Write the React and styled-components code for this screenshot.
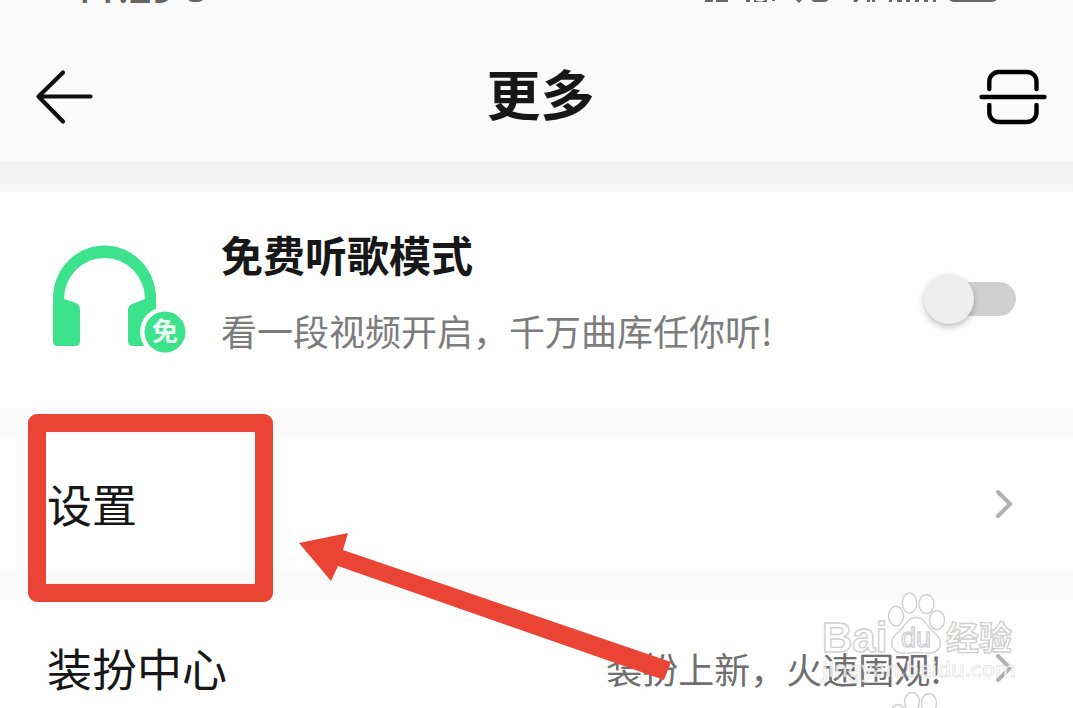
import styled, { createGlobalStyle } from "styled-components";

const GlobalStyle = createGlobalStyle`
  * {
    box-sizing: border-box;
  }

  body {
    margin: 0;
    background: #fefefe;
    font-family: "Noto Sans CJK SC", "Noto Sans", sans-serif;
    color: #171717;
  }
`;

const Page = styled.div`
  position: relative;
  height: 100vh;
  overflow: hidden;
`;

const StatusBar = styled.div`
  display: flex;
  align-items: flex-end;
  justify-content: space-between;
  height: 4px;
  padding: 0 74px 0 72px;
  overflow: hidden;
  background: #fafafa;
  color: #666;
`;

const StatusGroup = styled.div`
  display: flex;
  align-items: flex-end;
  gap: 12px;
`;

const Clock = styled.span`
  font-family: "Noto Sans", sans-serif;
  font-size: 40px;
  font-weight: 500;
  line-height: 32px;
`;

const Header = styled.header`
  display: grid;
  grid-template-columns: 1fr auto 1fr;
  align-items: center;
  padding: 28px 26px 0 34px;
  background: #fafafa;
`;

const IconButton = styled.button`
  display: flex;
  justify-self: ${(props) => props.$side};
  padding: 0;
  border: 0;
  background: none;
  color: #111;
  cursor: pointer;
`;

const Title = styled.h1`
  margin: 0;
  padding-bottom: 8px;
  font-size: 54px;
  font-weight: 700;
  line-height: 122px;
`;

const Divider = styled.div`
  height: ${(props) => (props.$shadow ? "30px" : "28px")};
  background: ${(props) =>
    props.$shadow ? "linear-gradient(#f0f0f0, #f3f3f3 50%, #f7f7f7)" : "#fafafa"};
`;

const Card = styled.section`
  display: flex;
  align-items: center;
  gap: 31px;
  padding: 34px 57px 36px 46px;
`;

const CardText = styled.div`
  display: flex;
  flex: 1;
  flex-direction: column;
  gap: 20px;
  padding-bottom: 14px;
`;

const CardTitle = styled.h2`
  margin: 0;
  font-size: 42px;
  font-weight: 700;
  line-height: 56px;
`;

const CardNote = styled.p`
  margin: 0;
  color: #7c7c7c;
  font-size: 36px;
  line-height: 56px;
`;

const Switch = styled.input`
  appearance: none;
  display: grid;
  align-items: center;
  width: 92px;
  height: 50px;
  margin: 0;
  cursor: pointer;

  &::before {
    content: "";
    grid-area: 1 / 1;
    height: 34px;
    margin-left: 10px;
    border-radius: 17px;
    background: #d0d0d0;
  }

  &::after {
    content: "";
    grid-area: 1 / 1;
    width: 50px;
    height: 50px;
    border-radius: 50%;
    background: #eee;
    box-shadow: 0 3px 6px rgba(0, 0, 0, 0.25);
  }

  &:checked::before {
    background: #3de28d;
  }

  &:checked::after {
    justify-self: end;
  }
`;

const Row = styled.a`
  position: relative;
  display: flex;
  align-items: center;
  gap: 52px;
  height: 136px;
  padding: 0 59px 0 47px;
  color: inherit;
  text-decoration: none;
`;

const RowLabel = styled.span`
  flex: 1;
  font-size: 45px;
  line-height: 64px;
`;

const RowNote = styled.span`
  color: #6f6f6f;
  font-size: 36px;
  line-height: 64px;
`;

const Highlight = styled.span`
  position: absolute;
  top: -22px;
  left: 28px;
  width: 245px;
  height: 188px;
  border: 18px solid #ea4435;
  border-radius: 9px;
  z-index: 1;
`;

const Pointer = styled.svg`
  position: absolute;
  top: 97px;
  left: 298px;
  z-index: 1;
`;

const Watermark = styled.svg`
  position: absolute;
  right: 51px;
  bottom: 0;
  pointer-events: none;
`;

function BackIcon() {
  return (
    <svg width="60" height="56" viewBox="0 0 60 56" fill="none" stroke="currentColor" strokeWidth="4.2" strokeLinecap="round" strokeLinejoin="round">
      <path d="M29 3.5 4.5 27.5 29 52.5M5 27.5H56.5" />
    </svg>
  );
}

function ScanIcon() {
  return (
    <svg width="68" height="58" viewBox="0 0 68 58" fill="none" stroke="#000" strokeWidth="4.4" strokeLinecap="round">
      <path d="M10.300 21V13.500a9.500 9.500 0 0 1 9.500-9.500H48a9.500 9.500 0 0 1 9.500 9.500V21M10.300 37v7.500a9.500 9.500 0 0 0 9.500 9.500H48a9.500 9.500 0 0 0 9.500-9.500V37M2.500 29H65.500" />
    </svg>
  );
}

function HeadphonesIcon() {
  return (
    <svg width="144" height="110" viewBox="0 0 144 110">
      <path
        fill="#3de28d"
        d="M7 54a51.500 52.500 0 0 1 103 0V98q0 4-4 4H87q-5 0-5-5V66q0-4 4-6l13-5a40.500 41 0 0 0-81 0l12 4q4 2 4 7V97q0 5-5 5H12q-5 0-5-5Z"
      />
      <circle cx="119" cy="88" r="25" fill="#fefefe" />
      <circle cx="119" cy="88" r="20.500" fill="#3de28d" />
      <text x="119" y="97" textAnchor="middle" fontSize="26" fontWeight="700" fill="#eafff3">
        免
      </text>
    </svg>
  );
}

function Chevron() {
  return (
    <svg width="20" height="32" viewBox="0 0 20 32" fill="none" stroke="#b0b0b0" strokeWidth="4" strokeLinecap="round">
      <path d="M4 4 16 16 4 28" />
    </svg>
  );
}

function StatusIcons() {
  return (
    <svg width="296" height="24" viewBox="0 0 296 24" fill="#666">
      <path d="M2 20h8v2H2zM13 19h12v3H13zM43 20h4v2h-4zM51 19q6 5 13 0v3H51zM69 19h3v2h-3zM92 19h8l-4 4zM108 17h18q0 5-5 5h-9q-4 0-4-5M150 19h6l-2 3h-3zM164 19h3v3h-3zM169 19h3v3h-3zM186 20h3v2h-3zM194 20h5v2h-5zM203 19h4v3h-4zM212 19h4v3h-4zM221 19h4v3h-4zM230 19h3v3h-3z" />
      <rect x="245" y="2" width="50" height="20" rx="6" />
    </svg>
  );
}

function SiteWatermark() {
  return (
    <Watermark width="204" height="118" viewBox="0 0 204 118" aria-hidden="true">
      <g fill="#fff" stroke="#d0d0d0" strokeWidth="1.4">
        <text x="4" y="62" fontFamily="Liberation Sans, sans-serif" fontSize="42" fontWeight="700">
          Bai
        </text>
        <ellipse cx="78" cy="26" rx="7.500" ry="9.800" />
        <ellipse cx="91.500" cy="13" rx="7.200" ry="10" />
        <ellipse cx="108.500" cy="14" rx="7.500" ry="9.500" />
        <ellipse cx="119" cy="30" rx="7.500" ry="9.500" />
        <path d="M98 27.500c-9 0-10 8-17 14-8 6-9 13-5 18 5 6 13 3 22 3s17 3 22-3c4-5 3-12-5-18-7-6-8-14-17-14Z" />
        <text x="98" y="57" textAnchor="middle" fontFamily="Liberation Sans, sans-serif" fontSize="27">
          du
        </text>
        <text x="128" y="60" fontSize="33" fontWeight="700">
          经验
        </text>
        <ellipse cx="94" cy="112" rx="7.500" ry="9.500" />
        <ellipse cx="111" cy="113" rx="7.500" ry="9.500" />
        <ellipse cx="80" cy="124" rx="7.500" ry="9.500" />
      </g>
      <text x="4" y="87" fontFamily="Noto Sans, sans-serif" fontSize="22" fontWeight="500" fill="#fff" fillOpacity="0.75" stroke="#bbb" strokeWidth="0.5" strokeOpacity="0.7">
        jingyan.baidu.com
      </text>
    </Watermark>
  );
}

export default function App() {
  return (
    <Page>
      <GlobalStyle />
      <StatusBar>
        <StatusGroup>
          <Clock>11:29</Clock>
          <svg width="20" height="24" viewBox="0 0 20 24" fill="#666">
            <rect x="0" y="2" width="19" height="20" rx="7" />
          </svg>
        </StatusGroup>
        <StatusIcons />
      </StatusBar>
      <Header>
        <IconButton type="button" aria-label="返回" $side="start">
          <BackIcon />
        </IconButton>
        <Title>更多</Title>
        <IconButton type="button" aria-label="扫一扫" $side="end">
          <ScanIcon />
        </IconButton>
      </Header>
      <Divider $shadow />

      {/* Free listening mode */}
      <Card>
        <HeadphonesIcon />
        <CardText>
          <CardTitle as="label" htmlFor="free-mode">
            免费听歌模式
          </CardTitle>
          <CardNote>看一段视频开启，千万曲库任你听!</CardNote>
        </CardText>
        <Switch type="checkbox" id="free-mode" />
      </Card>
      <Divider />

      {/* Settings */}
      <Row href="#settings">
        <RowLabel>设置</RowLabel>
        <Chevron />
        <Highlight />
        <Pointer width="376" height="150" viewBox="0 0 376 150" fill="#ea4435">
          <path d="M1 10 50 0 45 17 373 129 366 147 40 33 33 48Z" />
        </Pointer>
      </Row>
      <Divider />

      {/* Dress-up centre */}
      <Row href="#dress-up">
        <RowLabel>装扮中心</RowLabel>
        <RowNote>装扮上新，火速围观!</RowNote>
        <Chevron />
      </Row>
      <SiteWatermark />
    </Page>
  );
}
